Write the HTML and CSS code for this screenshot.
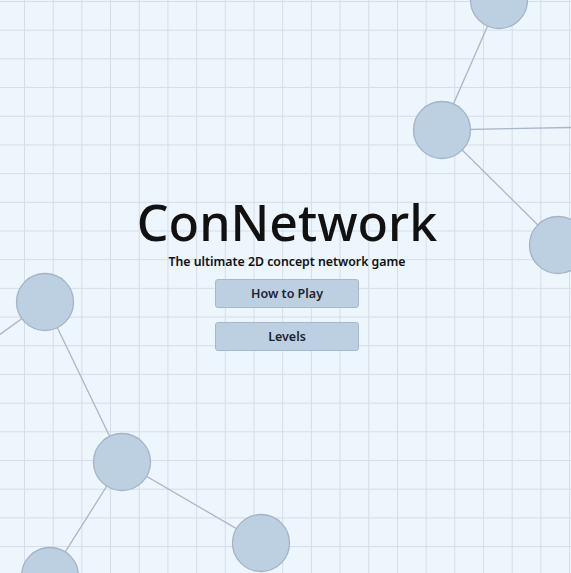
FILE: index.html
```html
<!DOCTYPE html>
<html lang="en">
<head>
    <meta charset="UTF-8">
    <meta name="viewport" content="width=device-width, initial-scale=1.0">
    <title>ConNetwork</title>
    <link rel="stylesheet" href="styles.css">
</head>
<body>
    <!-- Decorative concept network behind the menu -->
    <svg class="network" width="571" height="573" viewBox="0 0 571 573">
        <g class="edges">
            <line x1="499" y1="0" x2="442" y2="130"/>
            <line x1="442" y1="130" x2="700" y2="125"/>
            <line x1="442" y1="130" x2="558" y2="245"/>
            <line x1="45" y1="302" x2="-80" y2="392"/>
            <line x1="45" y1="302" x2="122" y2="462"/>
            <line x1="122" y1="462" x2="261" y2="543"/>
            <line x1="122" y1="462" x2="50" y2="576"/>
        </g>
        <g class="nodes">
            <circle cx="499" cy="0" r="28.5"/>
            <circle cx="442" cy="130" r="28.5"/>
            <circle cx="558" cy="245" r="28.5"/>
            <circle cx="45" cy="302" r="28.5"/>
            <circle cx="122" cy="462" r="28.5"/>
            <circle cx="261" cy="543" r="28.5"/>
            <circle cx="50" cy="576" r="28.5"/>
        </g>
    </svg>

    <main class="menu">
        <h1 class="title">ConNetwork</h1>
        <p class="subtitle">The ultimate 2D concept network game</p>
        <button class="menu-button">How to Play</button>
        <button class="menu-button">Levels</button>
    </main>
</body>
</html>
```

FILE: styles.css
```css
html, body {
    height: 100%;
}

body {
    margin: 0;
    overflow: hidden;
    font-family: 'Noto Sans', sans-serif;
    color: #111;
    background-color: #edf5fd;
    background-image:
        linear-gradient(to right, #d4dde8 1px, transparent 1px),
        linear-gradient(to bottom, #d4dde8 1px, transparent 1px);
    background-size: 28.7px 28.7px;
    background-position: 24px 1px;
}

.network {
    position: absolute;
    top: 0;
    left: 0;
}

.edges line {
    stroke: #a8b7c7;
    stroke-width: 1.3;
}

.nodes circle {
    fill: #bdd0e2;
    stroke: #a2b4c6;
    stroke-width: 1.3;
}

.menu {
    position: relative;
    height: 100%;
    display: flex;
    flex-direction: column;
    align-items: center;
    padding-top: 196px;
    padding-left: 3px;
    box-sizing: border-box;
}

.title {
    margin: 0;
    font-size: 50px;
    font-weight: 500;
    line-height: 52px;
}

.subtitle {
    margin: 5px 0 9px;
    font-size: 12.3px;
    font-weight: 600;
    line-height: 17px;
}

.menu-button {
    width: 144px;
    height: 29px;
    margin-bottom: 14px;
    font-family: 'Noto Sans', sans-serif;
    font-size: 12.5px;
    font-weight: 600;
    color: #1c2430;
    background-color: #bdd0e2;
    border: 1px solid #a6b9cc;
    border-radius: 3px;
}
```
